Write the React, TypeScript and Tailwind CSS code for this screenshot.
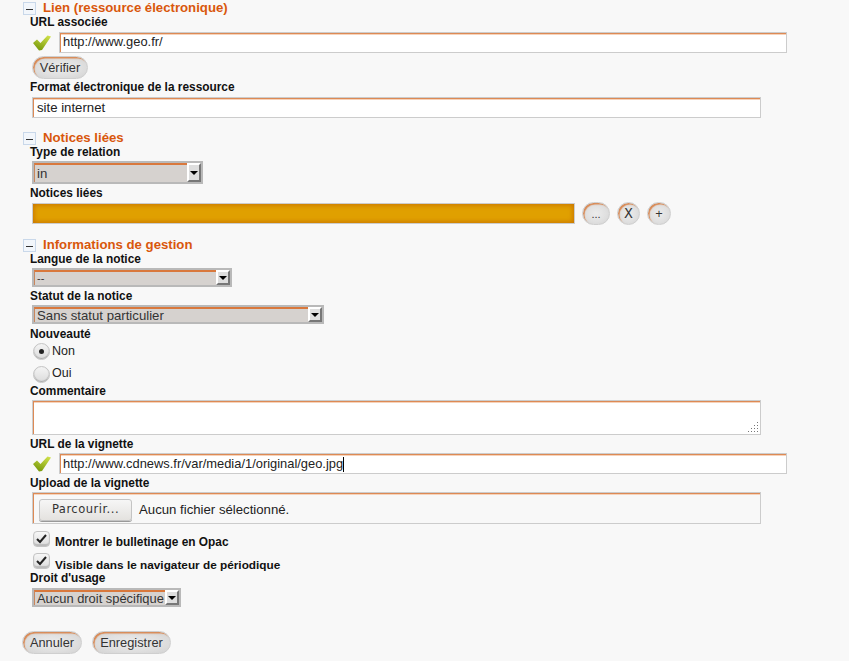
import React from "react";

const field = "border border-[#ccc] shadow-[inset_1px_1px_0_#dd8a55,inset_0_2px_0_#f6d3bb]";

function Toggle() {
  return (
    <svg width="13" height="13" viewBox="0 0 13 13" className="shrink-0">
      <rect x="0.5" y="0.5" width="12" height="12" fill="#f2f6fb" stroke="#c9d8ea" />
      <rect x="3" y="7" width="7" height="1" fill="#333" />
    </svg>
  );
}

function Header({ title, className }: { title: string; className: string }) {
  return (
    <div className={`flex items-end pl-[23px] shrink-0 ${className}`}>
      <Toggle />
      <span className="ml-[7px] text-[13.2px] leading-[15px] font-bold text-[#d9570c]">{title}</span>
    </div>
  );
}

function Label({ children, className = "" }: { children: React.ReactNode; className?: string }) {
  return <div className={`pl-[30px] h-[14px] shrink-0 text-[11.88px] leading-[14px] font-bold text-[#111] ${className}`}>{children}</div>;
}

function Check() {
  return (
    <svg width="18" height="16" viewBox="0 0 18 16" className="shrink-0">
      <defs>
        <linearGradient id="chk" x1="0.8" y1="0" x2="0.3" y2="1">
          <stop offset="0" stopColor="#cfe04a" />
          <stop offset="1" stopColor="#76980a" />
        </linearGradient>
      </defs>
      <path d="M0 8 L4 4.5 L7.5 8 L14.5 0.5 L18 1.5 L9 15 L6 15.5 Z" fill="url(#chk)" />
    </svg>
  );
}

function Input({ value, caret, className = "" }: { value: string; caret?: boolean; className?: string }) {
  return (
    <div className={`flex items-center bg-white w-[728px] h-[21px] ml-[8px] pl-[3px] text-[12.9px] text-[#222] ${field} ${className}`}>
      {value}
      {caret && <span className="w-px h-[15px] bg-black" />}
    </div>
  );
}

function Select({ value, w, h, size }: { value: string; w: string; h: string; size: string }) {
  return (
    <div className={`flex ml-[32px] border-2 border-[#b9b9b9] bg-[#d6d2cf] ${w} ${h}`}>
      <div className={`flex-1 flex items-center pl-[2px] border-t-2 border-l border-t-[#d9783c] border-l-[#c9865c] text-[#333] whitespace-nowrap overflow-hidden ${size}`}>{value}</div>
      <div className="w-[14px] shrink-0 flex items-center justify-center bg-[#dedede] border-t-2 border-l-2 border-white border-r-2 border-b-2 border-r-[#777] border-b-[#777]">
        <span className="w-0 h-0 border-x-[4px] border-x-transparent border-t-[4px] border-t-black" />
      </div>
    </div>
  );
}

function Btn({ children, className = "" }: { children: React.ReactNode; className?: string }) {
  return (
    <div className={`flex items-center justify-center shrink-0 h-[23px] rounded-full bg-[radial-gradient(ellipse_at_center,#ececec_0%,#e0e0e0_55%,#d2d2d2_100%)] border border-[#cfcfcf] shadow-[inset_1.5px_1.5px_1px_#d98a55] text-[12.8px] text-[#333] ${className}`}>
      {children}
    </div>
  );
}

function Radio({ checked }: { checked?: boolean }) {
  return (
    <span className="flex items-center justify-center shrink-0 w-[17px] h-[17px] rounded-full border border-[#c4c4c4] bg-[linear-gradient(#f4f4f4,#dcdcdc)] shadow-[inset_0_-1px_1px_#aaa]">
      {checked && <span className="w-[5px] h-[5px] rounded-full bg-[#222]" />}
    </span>
  );
}

function CheckBox() {
  return (
    <span className="flex items-center justify-center shrink-0 w-[17px] h-[16px] rounded-[4px] border border-[#c4c4c4] bg-[linear-gradient(#f7f7f7,#dcdcdc)] shadow-[inset_0_-2px_1px_#bbb]">
      <svg width="11" height="10" viewBox="0 0 11 10">
        <path d="M1 5 L4 8 L10 1" fill="none" stroke="#222" strokeWidth="2" />
      </svg>
    </span>
  );
}

export default function App() {
  return (
    <div className="bg-white w-[864px] h-[669px]" style={{ fontFamily: '"Liberation Sans", Arial, sans-serif' }}>
      <div className="bg-[#f8f8f8] w-[849px] h-[661px] overflow-hidden flex flex-col">
        <Header title="Lien (ressource électronique)" className="h-[14px] mt-[1px]" />
        <Label>URL associée</Label>
        <div className="flex items-center h-[21px] mt-[3px] pl-[33px] shrink-0">
          <Check />
          <Input value="http://www.geo.fr/" className="pb-[1px]" />
        </div>
        <Btn className="ml-[32px] w-[56px] mt-[3px]">Vérifier</Btn>
        <Label className="mt-[1px]">Format électronique de la ressource</Label>
        <div className={`flex items-center bg-white w-[729px] h-[21px] ml-[32px] mt-[3px] pl-[4px] pt-[1px] text-[13.2px] text-[#222] ${field} shrink-0`}>site internet</div>

        <Header title="Notices liées" className="mt-[13px] h-[14px]" />
        <Label>Type de relation</Label>
        <div className="mt-[2px]"><Select value="in" w="w-[171px]" h="h-[23px]" size="text-[13.2px]" /></div>
        <Label className="mt-[2px]">Notices liées</Label>
        <div className="flex items-center mt-[2px] pl-[32px] h-[23px] shrink-0">
          <div className="w-[543px] h-[21px] border border-[#ccc] bg-[#e0a000] shadow-[inset_0_0_5px_1px_#c97400]" />
          <Btn className="ml-[7px] w-[28px]"><span className="mt-[2px] text-[11px]">...</span></Btn>
          <Btn className="ml-[7px] w-[23px]"><span style={{ fontFamily: '"DejaVu Sans Mono", monospace' }} className="text-[14px]">X</span></Btn>
          <Btn className="ml-[7px] w-[24px]">+</Btn>
        </div>

        <Header title="Informations de gestion" className="mt-[13px] h-[14px]" />
        <Label>Langue de la notice</Label>
        <div className="mt-[2px]"><Select value="--" w="w-[200px]" h="h-[19px]" size="text-[11px]" /></div>
        <Label className="mt-[2px]">Statut de la notice</Label>
        <div className="mt-[2px]"><Select value="Sans statut particulier" w="w-[292px]" h="h-[19px]" size="text-[13.2px]" /></div>
        <Label className="mt-[3px]">Nouveauté</Label>
        <div className="flex items-start ml-[33px] h-[23px] mt-[2px] shrink-0 text-[12.5px] leading-[14px] text-[#222]"><Radio checked /><span className="ml-[2px] mt-[1px]">Non</span></div>
        <div className="flex items-start ml-[33px] h-[18px] shrink-0 text-[12.5px] leading-[14px] text-[#222]"><Radio /><span className="ml-[2px]">Oui</span></div>
        <Label>Commentaire</Label>
        <div className={`relative bg-white w-[729px] h-[35px] ml-[32px] mt-[2px] shrink-0 ${field}`}>
          <svg width="11" height="11" viewBox="0 0 11 11" className="absolute right-[1px] bottom-[1px]" fill="#777">
            <rect x="9" y="0" width="1" height="1" />
            <rect x="6" y="3" width="1" height="1" /><rect x="9" y="3" width="1" height="1" />
            <rect x="3" y="6" width="1" height="1" /><rect x="6" y="6" width="1" height="1" /><rect x="9" y="6" width="1" height="1" />
            <rect x="0" y="9" width="1" height="1" /><rect x="3" y="9" width="1" height="1" /><rect x="6" y="9" width="1" height="1" /><rect x="9" y="9" width="1" height="1" />
          </svg>
        </div>
        <Label className="mt-[2px]">URL de la vignette</Label>
        <div className="flex items-center h-[21px] mt-[2px] pl-[33px] shrink-0">
          <Check />
          <Input value="http://www.cdnews.fr/var/media/1/original/geo.jpg" caret className="pt-[1px]" />
        </div>
        <Label className="mt-[2px]">Upload de la vignette</Label>
        <div className={`flex items-center w-[729px] h-[32px] ml-[32px] mt-[2px] pl-[6px] pt-[3px] shrink-0 ${field}`}>
          <div style={{ fontFamily: '"DejaVu Sans", sans-serif' }} className="flex items-center justify-center w-[93px] h-[22px] rounded-[3px] border border-[#c4c4c4] bg-[linear-gradient(#f6f6f6,#e4e2df)] shadow-[0_1px_0_#999] text-[11.5px] tracking-[0.5px] text-[#333]">Parcourir...</div>
          <span className="ml-[7px] text-[13.2px] text-[#222]">Aucun fichier sélectionné.</span>
        </div>
        <div className="flex items-start ml-[33px] h-[22px] mt-[7px] shrink-0"><CheckBox /><span className="ml-[5px] mt-[4px] text-[11.88px] leading-[14px] font-bold text-[#111]">Montrer le bulletinage en Opac</span></div>
        <div className="flex items-start ml-[33px] h-[22px] shrink-0"><CheckBox /><span className="ml-[5px] mt-[5px] text-[11.8px] leading-[14px] font-bold text-[#111]">Visible dans le navigateur de périodique</span></div>
        <Label className="-mt-[4px]">Droit d'usage</Label>
        <div className="mt-[3px]"><Select value="Aucun droit spécifique" w="w-[149px]" h="h-[19px]" size="text-[12.9px]" /></div>
        <div className="flex ml-[22px] mt-[24px] shrink-0">
          <Btn className="w-[60px]">Annuler</Btn>
          <Btn className="w-[79px] ml-[10px]">Enregistrer</Btn>
        </div>
      </div>
    </div>
  );
}
